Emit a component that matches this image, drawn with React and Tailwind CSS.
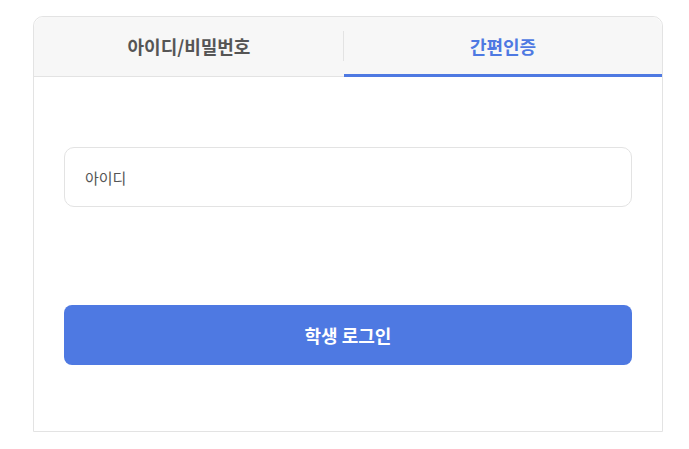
import React, { useState } from "react";

const font = { fontFamily: '"Noto Sans CJK KR", "Noto Sans", sans-serif' };

const App = () => {
  const [tab, setTab] = useState("easy");
  const [userId, setUserId] = useState("");

  return (
    <div className="min-h-screen w-full bg-white pt-[16px] pl-[33px]" style={font}>
      <div className="w-[630px] h-[416px] border border-[#e3e3e3] rounded-t-[10px] bg-white flex flex-col">
        {/* Tabs */}
        <div className="flex h-[60px] bg-[#f7f7f7] border-b border-[#e3e3e3] rounded-t-[10px]">
          <button
            className="relative w-[310px] flex items-center justify-center text-[18px] font-bold text-[#555555]"
            onClick={() => setTab("id")}
          >
            아이디/비밀번호
            <span className="absolute right-0 top-[14px] h-[30px] w-px bg-[#e3e3e3]" />
          </button>
          <button
            className="relative flex-1 flex items-center justify-center text-[18px] font-bold text-[#4e79e2]"
            onClick={() => setTab("easy")}
          >
            간편인증
            {tab === "easy" && (
              <span className="absolute left-0 right-0 bottom-[-1px] h-[3px] bg-[#4e79e2]" />
            )}
          </button>
        </div>

        {/* Form */}
        <div className="px-[30px] pt-[70px]">
          <input
            className="w-full h-[60px] border border-[#e3e3e3] rounded-[10px] px-[20px] text-[15px] text-[#555555] placeholder-[#555555] outline-none"
            placeholder="아이디"
            value={userId}
            onChange={(e) => setUserId(e.target.value)}
          />
          <button className="mt-[98px] w-full h-[60px] rounded-[8px] bg-[#4e79e2] text-white text-[18px] font-bold">
            학생 로그인
          </button>
        </div>
      </div>
    </div>
  );
};

export default App;
